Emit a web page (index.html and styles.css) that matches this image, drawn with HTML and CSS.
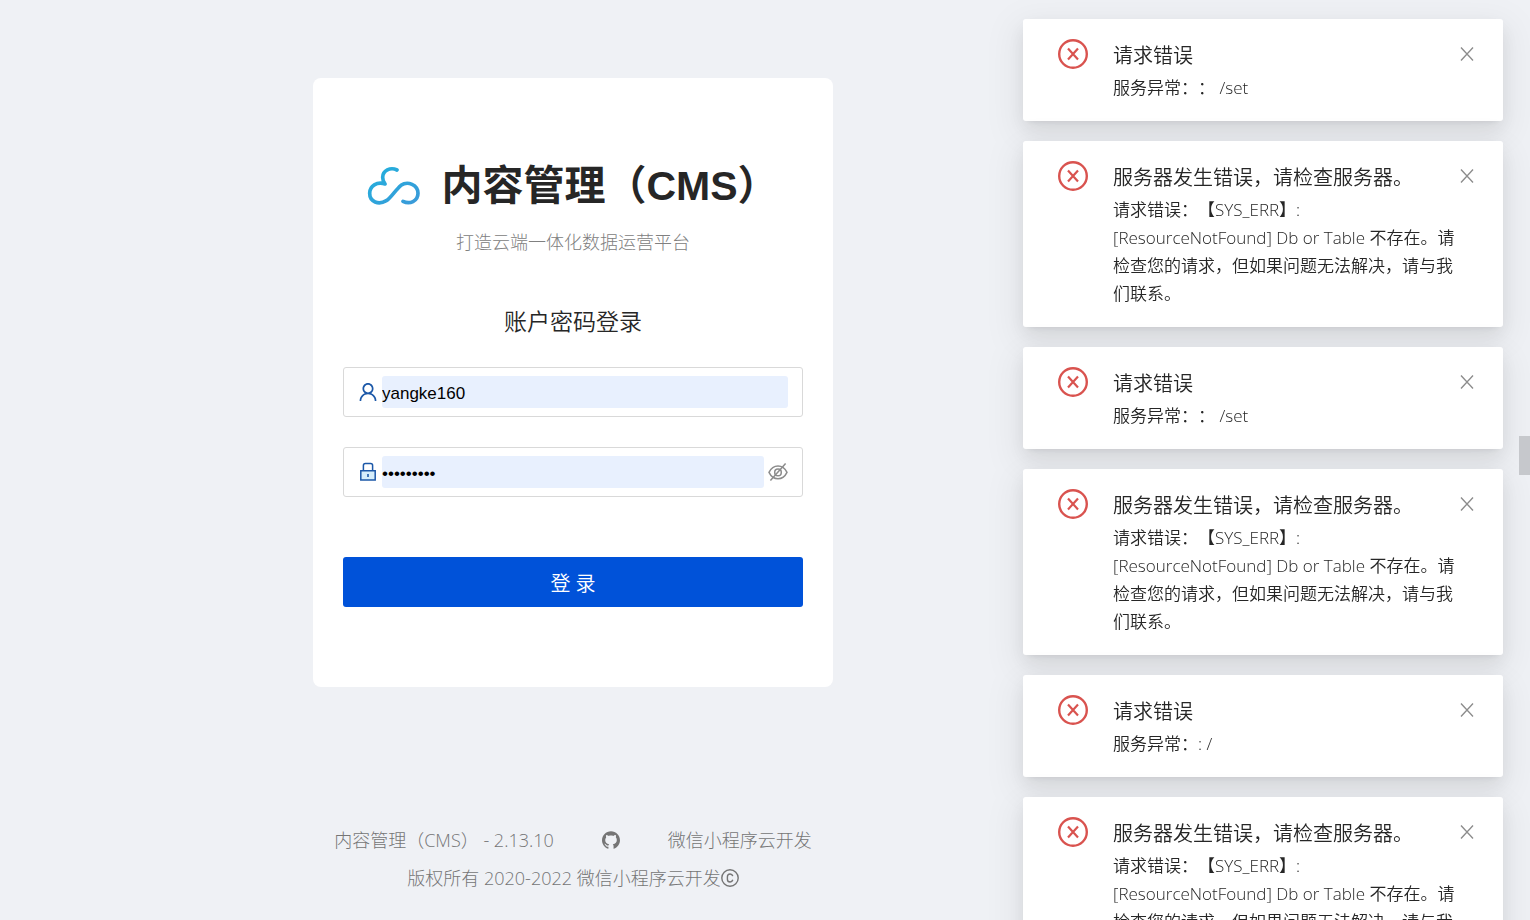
FILE: index.html
```html
<!DOCTYPE html>
<html lang="zh-CN">
<head>
  <meta charset="UTF-8">
  <meta name="viewport" content="width=device-width, initial-scale=1.0">
  <title>内容管理（CMS）</title>
  <link rel="stylesheet" href="styles.css">
</head>
<body>
  <!-- shared icons -->
  <svg class="sprite" aria-hidden="true">
    <symbol id="icon-error" viewBox="0 0 30 30">
      <g fill="none" stroke="currentColor">
        <circle cx="15" cy="15" r="13.8" stroke-width="2.4"/>
        <path d="M10 9.600l10 10.800M20 9.600l-10 10.800" stroke-width="2.2"/>
      </g>
    </symbol>
    <symbol id="icon-close" viewBox="0 0 14 14">
      <path d="M1 .5l12 13M13 .5l-12 13" fill="none" stroke="currentColor" stroke-width="1.4"/>
    </symbol>
  </svg>

  <div class="page">
    <main class="login-card">
      <div class="brand">
        <svg class="logo" viewBox="80 76 162 120" aria-hidden="true">
          <defs>
            <linearGradient id="logo-fill" x1="0" y1="0" x2="1" y2="1">
              <stop offset="0" stop-color="#22b0dc"/>
              <stop offset="1" stop-color="#3a9ad9"/>
            </linearGradient>
          </defs>
          <path d="M170 88C150 78 127 90 127 110c0 8 2 14 7 20C110 122 88 136 88 158c0 26 27 36 50 22 14-8 27-32 44-46 20-14 51-2 51 24 0 24-25 34-45 24" fill="none" stroke="url(#logo-fill)" stroke-width="11" stroke-linecap="round" stroke-linejoin="round"/>
        </svg>
        <h1>内容管理（CMS）</h1>
      </div>
      <p class="slogan">打造云端一体化数据运营平台</p>

      <form class="login-form">
        <h2>账户密码登录</h2>
        <div class="field">
          <label for="username" aria-label="用户名">
            <svg class="icon-user" viewBox="64 64 896 896"><path fill="currentColor" d="M858.5 763.6a374 374 0 00-80.6-119.5 375.63 375.63 0 00-119.5-80.6c-.4-.2-.8-.3-1.2-.5C719.5 518 760 444.7 760 362c0-137-111-248-248-248S264 225 264 362c0 82.7 40.5 156 102.8 201.1-.4.2-.8.3-1.2.5-44.8 18.9-85 46-119.5 80.6a375.63 375.63 0 00-80.6 119.5A371.7 371.7 0 00136 901.8a8 8 0 008 8.2h60c4.4 0 7.9-3.5 8-7.8 2-77.2 33-149.5 87.8-204.3 56.7-56.7 132-87.9 212.2-87.9s155.5 31.2 212.2 87.9C779 752.7 810 825 812 902.2c.1 4.4 3.6 7.8 8 7.8h60a8 8 0 008-8.2c-1-47.8-10.9-94.3-29.5-138.2zM512 534c-45.9 0-89.1-17.9-121.6-50.4S340 407.9 340 362c0-45.9 17.9-89.1 50.4-121.6S466.1 190 512 190s89.1 17.9 121.6 50.4S684 316.1 684 362c0 45.9-17.9 89.1-50.4 121.6S557.9 534 512 534z"/></svg>
          </label>
          <input id="username" type="text" value="yangke160">
        </div>
        <div class="field">
          <label for="password" aria-label="密码">
            <svg class="icon-lock" viewBox="0 0 20 20">
              <path d="M2.800 8.800h14.400v9.200H2.800z" fill="#d6eefb" stroke="currentColor" stroke-width="1.5"/>
              <path d="M5.400 8.600V3.400q0-2 2-2h5.200q2 0 2 2v5.200" fill="none" stroke="currentColor" stroke-width="1.5"/>
              <path d="M10 12v3" stroke="currentColor" stroke-width="1.6"/>
            </svg>
          </label>
          <input id="password" type="password" value="yangke160">
          <button class="eye" type="button" aria-label="显示密码">
            <svg viewBox="0 0 20 20" fill="none" stroke="currentColor" stroke-width="1.5">
              <path d="M1 10.400C3 6.300 6 4 10 4s7 2.300 9 6.400c-2 4.100-5 6.400-9 6.400s-7-2.300-9-6.400z"/>
              <circle cx="10" cy="10.400" r="3.300"/>
              <path d="M17.600 1.600L2.400 18.600"/>
            </svg>
          </button>
        </div>
        <button class="submit" type="submit">登 录</button>
      </form>
    </main>

    <footer class="footer">
      <div class="links">
        <a href="#">内容管理（CMS） - 2.13.10</a>
        <a href="#" aria-label="GitHub">
          <svg class="icon-github" viewBox="64 64 896 896"><path fill="currentColor" d="M511.6 76.3C264.3 76.2 64 276.4 64 523.5 64 718.9 189.3 885 363.8 946c23.5 5.9 19.9-10.8 19.9-22.2v-77.5c-135.7 15.9-141.2-73.9-150.3-88.9C215 726 171.5 718 184.5 703c30.9-15.9 62.4 4 98.9 57.9 26.4 39.1 77.9 32.5 104 26 5.7-23.5 17.9-44.5 34.7-60.8-140.6-25.2-199.2-111-199.2-213 0-49.5 16.3-95 48.3-131.7-20.4-60.5 1.9-112.3 4.9-120 58.1-5.2 118.5 41.6 123.2 45.3 33-8.9 70.7-13.6 112.9-13.6 42.4 0 80.2 4.9 113.5 13.9 11.3-8.6 67.3-48.8 121.3-43.9 2.9 7.700 24.700 58.300 5.500 118 32.400 36.800 48.900 82.700 48.900 132.300 0 102.200-59 188.100-200 212.900a127.500 127.500 0 0138.100 91v112.500c.8 9 0 17.900 15 17.900 177.100-59.700 304.600-227 304.600-424.100 0-247.200-200.400-447.300-447.500-447.300z"/></svg>
        </a>
        <a href="#">微信小程序云开发</a>
      </div>
      <div class="copyright">
        <span>版权所有 2020-2022 微信小程序云开发</span>
        <svg viewBox="0 0 18 18" fill="none" stroke="currentColor" stroke-width="1.4" aria-hidden="true">
          <circle cx="9" cy="9" r="8.200"/>
          <path d="M11.800 7.200C11.400 5.600 10.400 5 9.100 5 7.300 5 6.400 6.200 6.400 7.800v2.400c0 1.600.9 2.800 2.700 2.800 1.300 0 2.300-.7 2.700-2.200"/>
        </svg>
      </div>
    </footer>
  </div>

  <div class="notifications">
    <section class="notice">
      <svg class="notice-icon"><use href="#icon-error"/></svg>
      <div class="notice-body">
        <h3>请求错误</h3>
        <p>服务异常：： /set</p>
      </div>
      <button class="notice-close" aria-label="关闭"><svg><use href="#icon-close"/></svg></button>
    </section>
    <section class="notice">
      <svg class="notice-icon"><use href="#icon-error"/></svg>
      <div class="notice-body">
        <h3>服务器发生错误，请检查服务器。</h3>
        <p>请求错误：【SYS_ERR】: [ResourceNotFound] Db or Table 不存在。请检查您的请求，但如果问题无法解决，请与我们联系。</p>
      </div>
      <button class="notice-close" aria-label="关闭"><svg><use href="#icon-close"/></svg></button>
    </section>
    <section class="notice">
      <svg class="notice-icon"><use href="#icon-error"/></svg>
      <div class="notice-body">
        <h3>请求错误</h3>
        <p>服务异常：： /set</p>
      </div>
      <button class="notice-close" aria-label="关闭"><svg><use href="#icon-close"/></svg></button>
    </section>
    <section class="notice">
      <svg class="notice-icon"><use href="#icon-error"/></svg>
      <div class="notice-body">
        <h3>服务器发生错误，请检查服务器。</h3>
        <p>请求错误：【SYS_ERR】: [ResourceNotFound] Db or Table 不存在。请检查您的请求，但如果问题无法解决，请与我们联系。</p>
      </div>
      <button class="notice-close" aria-label="关闭"><svg><use href="#icon-close"/></svg></button>
    </section>
    <section class="notice">
      <svg class="notice-icon"><use href="#icon-error"/></svg>
      <div class="notice-body">
        <h3>请求错误</h3>
        <p>服务异常：: /</p>
      </div>
      <button class="notice-close" aria-label="关闭"><svg><use href="#icon-close"/></svg></button>
    </section>
    <section class="notice">
      <svg class="notice-icon"><use href="#icon-error"/></svg>
      <div class="notice-body">
        <h3>服务器发生错误，请检查服务器。</h3>
        <p>请求错误：【SYS_ERR】: [ResourceNotFound] Db or Table 不存在。请检查您的请求，但如果问题无法解决，请与我们联系。</p>
      </div>
      <button class="notice-close" aria-label="关闭"><svg><use href="#icon-close"/></svg></button>
    </section>
  </div>

  <div class="side-handle"></div>
</body>
</html>
```
FILE: styles.css
```css
* {
  box-sizing: border-box;
}

body {
  margin: 0;
  background-color: #eff1f5;
  color: #262626;
  font-family: "Open Sans", "Noto Sans CJK SC", sans-serif;
  font-size: 18px;
  font-weight: 300;
  text-spacing-trim: space-all;
  overflow: hidden;
}

h1, h2, h3, p {
  margin: 0;
}

svg {
  display: block;
}

button {
  border: none;
  padding: 0;
  background: none;
  font-family: inherit;
  font-weight: inherit;
  cursor: pointer;
}

.sprite {
  display: none;
}

.page {
  display: flex;
  flex-direction: column;
  justify-content: space-between;
  align-items: center;
  min-height: 100vh;
  padding: 78px 384px 28px 0;
}

/* login card */
.login-card {
  width: 520px;
  max-width: 100%;
  padding: 80px 30px;
  background-color: white;
  border-radius: 8px;
}

.brand {
  display: flex;
  align-items: center;
  justify-content: center;
  gap: 20px;
  height: 56px;
}

.logo {
  width: 54px;
  height: 40px;
}

.brand h1 {
  font-family: "Liberation Sans", "Noto Sans CJK SC", sans-serif;
  font-size: 41px;
  font-weight: 700;
  line-height: 56px;
  white-space: nowrap;
}

.slogan {
  margin-top: 14px;
  color: #808080;
  line-height: 28px;
  text-align: center;
}

.login-form h2 {
  margin: 48px 0 29px;
  font-size: 23px;
  font-weight: 350;
  line-height: 34px;
  text-align: center;
}

.field {
  display: flex;
  align-items: center;
  gap: 4px;
  height: 50px;
  margin-bottom: 30px;
  padding: 0 14px;
  border: 1px solid #d9d9d9;
  border-radius: 3px;
}

.field label {
  color: #1c58a8;
}

.icon-user, .icon-lock {
  width: 20px;
  height: 20px;
}

.field input {
  flex: 1;
  min-width: 0;
  height: 32px;
  padding: 4px 0 0;
  border: none;
  border-radius: 3px;
  outline: none;
  background-color: #e8f0fe;
  color: black;
  font-family: "Liberation Sans", Arial, sans-serif;
  font-size: 17px;
}

.eye {
  color: #8c8c8c;
}

.eye svg {
  width: 20px;
  height: 20px;
}

.submit {
  display: block;
  width: 100%;
  height: 50px;
  margin-top: 60px;
  border-radius: 3px;
  background-color: #0052d9;
  color: white;
  font-size: 20px;
  font-weight: 350;
}

/* footer */
.footer {
  color: #757575;
  line-height: 28px;
}

.footer a {
  color: inherit;
  text-decoration: none;
}

.links {
  display: flex;
  align-items: center;
  justify-content: center;
  gap: 48px;
  margin-bottom: 10px;
}

.icon-github {
  width: 18px;
  height: 18px;
}

.copyright {
  display: flex;
  align-items: center;
  justify-content: center;
}

.copyright svg {
  width: 18px;
  height: 18px;
}

/* error notifications, stacked over the page */
.notifications {
  position: fixed;
  top: 19px;
  right: 27px;
  display: flex;
  flex-direction: column;
  gap: 20px;
  width: 480px;
}

.notice {
  display: flex;
  align-items: flex-start;
  position: relative;
  padding: 20px 40px 19px 35px;
  border-radius: 3px;
  background-color: white;
  box-shadow: 0 4px 8px -5px rgba(0, 0, 0, 0.12), 0 8px 20px rgba(0, 0, 0, 0.08), 0 11px 35px 10px rgba(0, 0, 0, 0.05);
}

.notice-icon {
  flex: none;
  width: 30px;
  height: 30px;
  margin-right: 25px;
  color: #d9534f;
}

.notice-body {
  flex: 1;
}

.notice h3 {
  margin-bottom: 1px;
  font-size: 20px;
  font-weight: 350;
  line-height: 34px;
}

.notice p {
  font-size: 17px;
  font-weight: 350;
  line-height: 28px;
}

.notice-close {
  position: absolute;
  top: 28px;
  right: 29px;
  color: #8c8c8c;
}

.notice-close svg {
  width: 14px;
  height: 14px;
}

.side-handle {
  position: fixed;
  top: 436px;
  right: 0;
  width: 11px;
  height: 39px;
  background-color: #c6c8cc;
}
```
